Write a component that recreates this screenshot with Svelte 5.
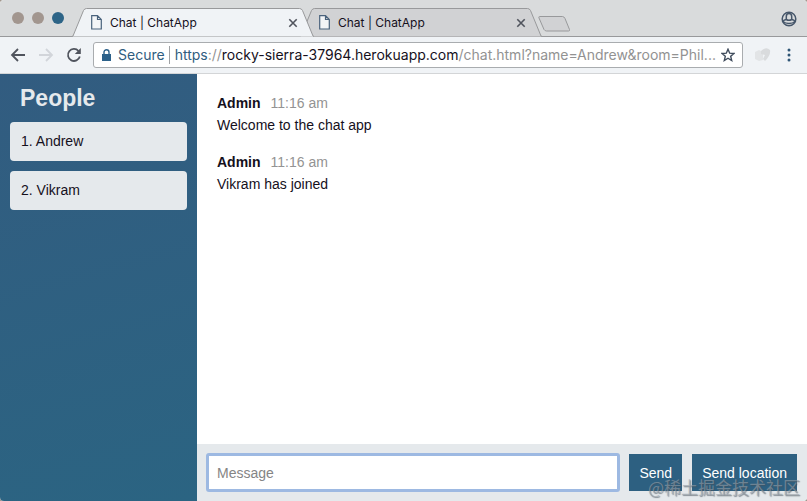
<script lang="ts">
    type Message = { from: string; time: string; text: string };

    const tabs = [
        { title: 'Chat | ChatApp', active: true },
        { title: 'Chat | ChatApp', active: false },
    ];
    const people = ['Andrew', 'Vikram'];
    const messages: Message[] = [
        { from: 'Admin', time: '11:16 am', text: 'Welcome to the chat app' },
        { from: 'Admin', time: '11:16 am', text: 'Vikram has joined' },
    ];

    let draft = $state('');
</script>

<div class="window">
    <header class="tabstrip">
        <div class="lights">
            <button class="lights__dot" aria-label="Close window"></button>
            <button class="lights__dot" aria-label="Minimize window"></button>
            <button class="lights__dot lights__dot--zoom" aria-label="Zoom window"></button>
        </div>

        <div class="tabs">
            {#each tabs as tab}
                <div class="tab" class:tab--active={tab.active}>
                    <svg class="tab__shape" viewBox="0 0 242 29" preserveAspectRatio="none" aria-hidden="true">
                        <path d="M0 28.500 L1 28 L11.500 2.500 Q12.500 .5 14.500 .5 H227.500 Q229.500 .5 230.500 2.500 L241 28 L242 28.500" />
                    </svg>
                    <svg class="tab__page" viewBox="0 0 11 15" aria-hidden="true">
                        <path d="M.7 .7 H6.500 L10.300 4.500 V14 H.7 Z M6.500 .7 V4.500 H10.300" />
                    </svg>
                    <span class="tab__title">{tab.title}</span>
                    <button class="tab__close" aria-label="Close tab">
                        <svg viewBox="0 0 10 10"><path d="M1.300 1.300 L8.700 8.700 M8.700 1.300 L1.300 8.700" /></svg>
                    </button>
                </div>
            {/each}
            <button class="new-tab" aria-label="New tab">
                <svg viewBox="0 0 34 17">
                    <path d="M1.500 1.500 H24.500 Q26 1.500 27 3.500 L31.500 14.500 Q32 16 30.500 16 H8.500 Q7 16 6 14.500 L1 3 Q.5 1.500 1.500 1.500 Z" />
                </svg>
            </button>
        </div>

        <button class="profile" aria-label="Profile">
            <svg viewBox="0 0 16 16">
                <circle cx="8" cy="8" r="6.800" />
                <path d="M5.300 8.500 V5.500 A2.700 3 0 0 1 10.700 5.500 V8.500" />
                <path d="M1.800 10.500 Q3 8.700 5.300 8.500 Q8 10 10.700 8.500 Q13 8.700 14.200 10.500 Q11.500 12.500 8 12.500 Q4.500 12.500 1.800 10.500 Z" />
            </svg>
        </button>
    </header>

    <nav class="toolbar">
        <button class="tool" aria-label="Back">
            <svg viewBox="0 0 16 16"><path d="M15 8 H2 M8 2 L2 8 L8 14" /></svg>
        </button>
        <button class="tool tool--off" aria-label="Forward" disabled>
            <svg viewBox="0 0 16 16"><path d="M1 8 H14 M8 2 L14 8 L8 14" /></svg>
        </button>
        <button class="tool" aria-label="Reload">
            <svg viewBox="0 0 16 16">
                <path d="M13.800 9.500 A6 6 0 1 1 12.500 4" />
                <path class="solid" d="M14.800 1 V7 H8.800 Z" />
            </svg>
        </button>

        <div class="address">
            <svg class="address__lock" viewBox="0 0 9 12" aria-hidden="true">
                <path class="solid" d="M0 5 H9 V12 H0 Z" />
                <path d="M2 5 V3.200 A2.500 2.500 0 0 1 7 3.200 V5" />
            </svg>
            <span class="address__secure">Secure</span>
            <div class="address__url" role="textbox" tabindex="0" aria-label="Address">
                <span class="address__scheme">https</span><span class="address__rest">://</span>rocky-sierra-37964.herokuapp.com<span class="address__rest">/chat.html?name=Andrew&amp;room=Phil...</span>
            </div>
            <button class="address__star" aria-label="Bookmark this page">
                <svg viewBox="0 0 14 14">
                    <path d="M7 1.200 L8.700 5.200 L13 5.500 L9.700 8.300 L10.700 12.500 L7 10.200 L3.300 12.500 L4.300 8.300 L1 5.500 L5.300 5.200 Z" />
                </svg>
            </button>
        </div>

        <button class="extension" aria-label="Extension">
            <svg viewBox="0 0 16 16">
                <path class="extension__back" d="M0 5 L4 3 L8 5 V13 L4 14 L0 12 Z" />
                <path class="extension__front" d="M6 4 Q11 -1 15 3 Q16 8 10 14 L8 12 L10 8 L6 7 Z" />
            </svg>
        </button>
        <button class="menu" aria-label="Menu">
            <svg viewBox="0 0 4 14">
                <circle cx="2" cy="2" r="1.500" />
                <circle cx="2" cy="7" r="1.500" />
                <circle cx="2" cy="12" r="1.500" />
            </svg>
        </button>
    </nav>

    <div class="chat">
        <aside class="sidebar">
            <h1 class="sidebar__title">People</h1>
            <ol class="people">
                {#each people as person, i}
                    <li class="people__item">{i + 1}. {person}</li>
                {/each}
            </ol>
        </aside>

        <main class="main">
            <ul class="messages">
                {#each messages as message}
                    <li class="message">
                        <div class="message__head">
                            <strong>{message.from}</strong>
                            <time class="message__time">{message.time}</time>
                        </div>
                        <p class="message__body">{message.text}</p>
                    </li>
                {/each}
            </ul>

            <form class="composer" onsubmit={(e) => e.preventDefault()}>
                <input class="composer__input" type="text" placeholder="Message" aria-label="Message" bind:value={draft} />
                <button class="composer__button" type="submit">Send</button>
                <button class="composer__button" type="button">Send location</button>
            </form>
        </main>
    </div>

    <span class="watermark">@稀土掘金技术社区</span>
</div>

<style>
    :global(body) {
        margin: 0;
        background: #a2988e;
    }

    .window {
        position: relative;
        display: flex;
        flex-direction: column;
        min-height: 100vh;
        overflow: hidden;
        border-radius: 4px;
        background: #fff;
        color: #15101c;
        font-family: 'Liberation Sans', Arial, sans-serif;
        font-size: 14px;
    }

    button {
        padding: 0;
        border: 0;
        background: none;
        font: inherit;
    }

    svg {
        display: block;
        fill: none;
        stroke: #50545d;
    }

    .solid {
        fill: currentColor;
        stroke: none;
    }

    .tabstrip {
        display: flex;
        align-items: center;
        height: 36px;
        border-bottom: 1px solid #98999b;
        background: #d9dbdc;
        font-family: Inter, sans-serif;
    }

    .lights {
        display: flex;
        gap: 8px;
        padding-left: 12px;
        margin-right: 8px;
    }

    .lights__dot {
        width: 12px;
        height: 12px;
        border-radius: 50%;
        background: #a2968f;
    }

    .lights__dot--zoom {
        background: #2d6487;
    }

    .tabs {
        display: flex;
        flex: 1;
        align-self: flex-end;
        min-width: 0;
        margin-bottom: -1px;
    }

    .tab {
        position: relative;
        display: flex;
        align-items: center;
        flex: 0 1 242px;
        box-sizing: border-box;
        height: 29px;
        padding: 0 16px 0 19px;
        margin-right: -14px;
    }

    .tab--active {
        z-index: 1;
    }

    .tab__shape {
        position: absolute;
        inset: 0;
        width: 100%;
        height: 100%;
        fill: #d1d2d4;
        stroke: #98999b;
    }

    .tab--active .tab__shape {
        fill: #f0f3f6;
    }

    .tab__page {
        position: relative;
        width: 11px;
        height: 15px;
        fill: #f3f5f7;
        stroke: #49627c;
        stroke-width: 1.2;
    }

    .tab__title {
        position: relative;
        flex: 1;
        margin-left: 8px;
        overflow: hidden;
        font-size: 12px;
        line-height: 16px;
        white-space: nowrap;
    }

    .tab__close {
        position: relative;
        width: 10px;
        height: 10px;
    }

    .tab__close svg {
        stroke-width: 1.6;
    }

    .new-tab {
        align-self: center;
        width: 34px;
        height: 17px;
        margin-top: 2px;
        margin-left: 10px;
    }

    .new-tab svg {
        fill: #d1d2d4;
        stroke: #98999b;
    }

    .profile {
        width: 16px;
        height: 16px;
        margin-top: 2px;
        margin-right: 10px;
    }

    .profile svg {
        stroke: #46566a;
        stroke-width: 1.5;
    }

    .toolbar {
        display: flex;
        align-items: center;
        gap: 12px;
        box-sizing: border-box;
        height: 37px;
        padding: 0 16px 0 10px;
        border-bottom: 1px solid #d3d5d7;
        background: #f0f3f6;
        font-family: Inter, sans-serif;
    }

    .tool {
        width: 16px;
        height: 16px;
        color: #50545d;
    }

    .tool svg {
        stroke-width: 1.8;
    }

    .tool--off svg {
        stroke: #d2d5da;
    }

    .address {
        display: flex;
        align-items: center;
        flex: 1;
        box-sizing: border-box;
        min-width: 0;
        height: 26px;
        padding: 0 7px 0 8px;
        margin-left: -1px;
        border: 1px solid #a9acaf;
        border-radius: 3px;
        background: #fff;
        line-height: 18px;
    }

    .address__lock {
        width: 9px;
        height: 12px;
        color: #2c618a;
        stroke: #2c618a;
        stroke-width: 1.4;
    }

    .address__secure {
        padding-right: 4px;
        margin-left: 7px;
        border-right: 1px solid #9fa2a5;
        color: #2f5d80;
    }

    .address__url {
        flex: 1;
        min-width: 0;
        margin-left: 5px;
        overflow: hidden;
        white-space: nowrap;
    }

    .address__scheme {
        color: #2f5d80;
    }

    .address__rest {
        color: #929292;
    }

    .address__star {
        width: 14px;
        height: 14px;
    }

    .address__star svg {
        stroke: #3f4b5c;
        stroke-width: 1.4;
    }

    .extension {
        width: 16px;
        height: 16px;
    }

    .extension svg {
        stroke: none;
    }

    .extension__back {
        fill: #e2e4e6;
    }

    .extension__front {
        fill: #d9dbdd;
    }

    .menu {
        width: 4px;
        height: 14px;
        margin-left: 4px;
    }

    .menu svg {
        fill: #2f5676;
        stroke: none;
    }

    .chat {
        display: flex;
        flex: 1;
    }

    .sidebar {
        flex: 0 0 197px;
        box-sizing: border-box;
        padding: 10px;
        background: linear-gradient(165deg, #325c80, #2b6482);
    }

    .sidebar__title {
        margin: 0 10px 10px;
        color: #e5e9ec;
        font-size: 23px;
        line-height: 28px;
    }

    .people {
        display: flex;
        flex-direction: column;
        gap: 10px;
        padding: 0;
        margin: 0;
        list-style: none;
    }

    .people__item {
        padding: 0 11px;
        border-radius: 4px;
        background: #e5e9ec;
        line-height: 39px;
    }

    .main {
        display: flex;
        flex-direction: column;
        flex: 1;
        min-width: 0;
    }

    .messages {
        display: flex;
        flex-direction: column;
        flex: 1;
        gap: 15px;
        padding: 18px 20px;
        margin: 0;
        list-style: none;
        line-height: 22px;
    }

    .message__head {
        display: flex;
        gap: 10px;
    }

    .message__time {
        color: #939393;
    }

    .message__body {
        margin: 0;
    }

    .composer {
        display: flex;
        gap: 10px;
        padding: 10px;
        background: #e5e9ec;
    }

    .composer__input {
        flex: 1;
        box-sizing: border-box;
        min-width: 0;
        height: 37px;
        padding: 0 8px;
        border: 2px solid #9db9e2;
        border-radius: 2px;
        outline: 0;
        box-shadow: 0 0 0 1px #9db9e2;
        font: inherit;
    }

    .composer__input::placeholder {
        color: #858585;
    }

    .composer__button {
        padding: 0 10px;
        background: #2d6081;
        color: #fff;
    }

    .watermark {
        position: absolute;
        right: 7px;
        bottom: 2px;
        color: rgba(150, 158, 166, 0.6);
        font-family: 'Noto Sans CJK SC', sans-serif;
        font-size: 17px;
        line-height: 24px;
        text-shadow: 1px 1px 1px rgba(70, 80, 90, 0.6);
        pointer-events: none;
    }
</style>
